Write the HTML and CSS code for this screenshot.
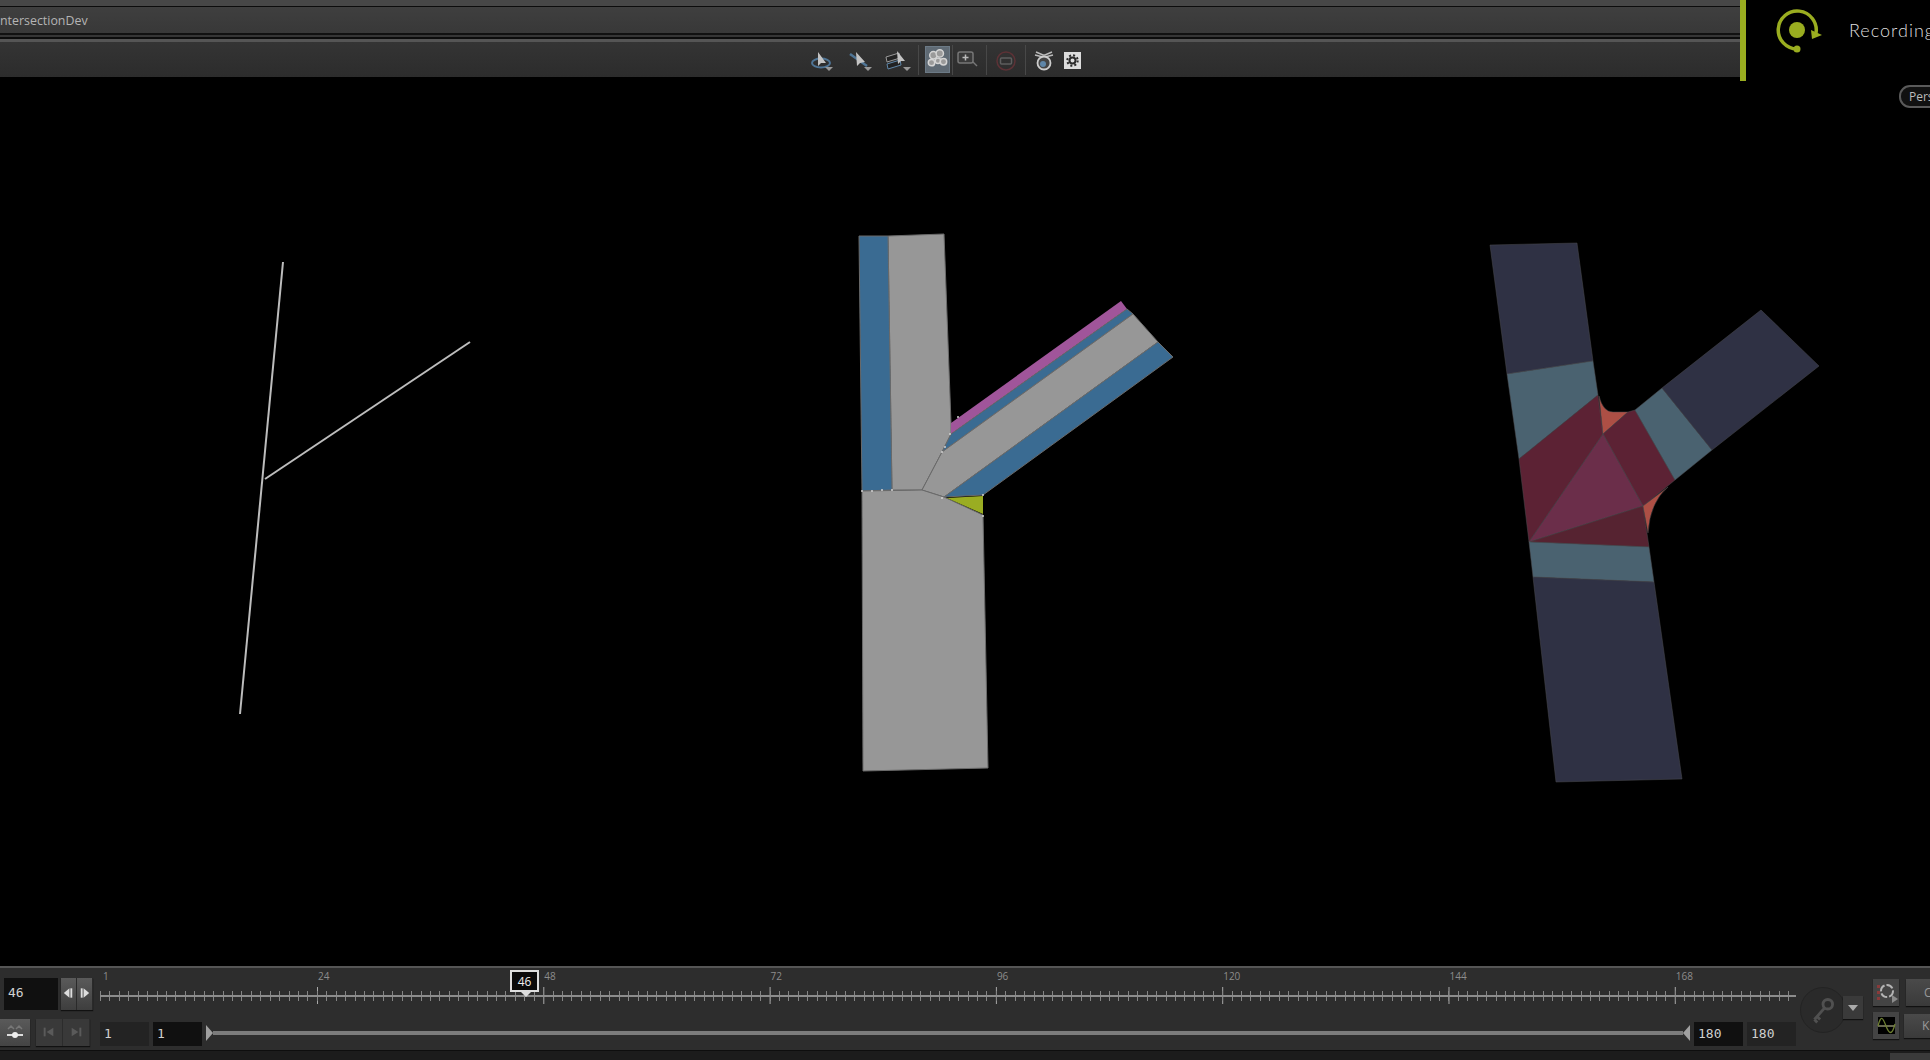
FILE: index.html
```html
<html>
  <head>
    <meta charset="utf-8">
    <link rel="stylesheet" href="styles.css">
  </head>
  <body>
    <div class="top">
      <div class="chrome">
        <div class="stripA"></div>
        <div class="titleBar">ntersectionDev</div>
        <div class="stripB"></div>
        <div class="toolbar">
          <svg class="tool" viewBox="0 0 28 28">
            <ellipse cx="13" cy="16" rx="9" ry="4.5" fill="none" stroke="#4f7596" stroke-width="2"/>
            <polygon points="10,5 10,19 13,16 18,16" fill="#c4c4c4"/>
            <polygon points="17,20 25,20 21,24" fill="#999"/>
          </svg>
          <svg class="tool" viewBox="0 0 28 28">
            <line x1="3" y1="7" x2="20" y2="19" stroke="#4f7596" stroke-width="2.5"/>
            <polygon points="9,5 10,19 13,16 18,15" fill="#c4c4c4"/>
            <polygon points="17,20 25,20 21,24" fill="#999"/>
          </svg>
          <svg class="tool" viewBox="0 0 28 28">
            <polygon points="1,10 14,6 15,11 2,15" fill="#222" stroke="#999"/>
            <polygon points="2,17 15,13 16,18 3,22" fill="#222" stroke="#5f86a8"/>
            <polygon points="12,4 13,17 16,14 20,14" fill="#c4c4c4"/>
            <polygon points="18,20 26,20 22,24" fill="#999"/>
          </svg>
          <div class="sep"></div>
          <div class="toolOn">
            <svg viewBox="0 0 25 26">
              <g fill="#9a9a9a" stroke="#d4d4d4" stroke-width="1.6">
                <circle cx="8" cy="9" r="4"/>
                <circle cx="15" cy="7" r="4"/>
                <circle cx="6" cy="17" r="3.5"/>
                <circle cx="13" cy="15" r="3"/>
                <circle cx="19" cy="16" r="3.5"/>
              </g>
            </svg>
          </div>
          <div class="sep"></div>
          <svg class="tool toolStart" viewBox="0 0 28 28">
            <rect x="5" y="5" width="15" height="11" rx="2" fill="#3a3a3a" stroke="#777" stroke-width="1.5"/>
            <path d="M12.500 7.500v6M9.500 10.500h6" stroke="#bbb" stroke-width="1.5"/>
            <line x1="20" y1="15" x2="24" y2="19" stroke="#777" stroke-width="1.5"/>
          </svg>
          <div class="sep"></div>
          <svg class="tool" viewBox="0 0 28 28">
            <circle cx="14" cy="14" r="9" fill="none" stroke="#5c3236" stroke-width="1.500"/>
            <rect x="8.500" y="11" width="11" height="6" rx="1" fill="none" stroke="#5e5e5e" stroke-width="1.500"/>
          </svg>
          <div class="sep"></div>
          <svg class="tool" viewBox="0 0 28 28">
            <path d="M6 5l7 3h2l7-3M5 8l8 2h2l8-2" fill="none" stroke="#bbb" stroke-width="1.500"/>
            <circle cx="14" cy="16" r="6.500" fill="#444" stroke="#ccc" stroke-width="1.800"/>
            <circle cx="13" cy="17" r="3" fill="#5f86a8"/>
          </svg>
          <div class="gearBox">
            <svg viewBox="0 0 17 17">
              <circle cx="8.500" cy="8.500" r="3" fill="none" stroke="#2a2a2a" stroke-width="2"/>
              <circle cx="8.500" cy="8.500" r="5.200" fill="none" stroke="#2a2a2a" stroke-width="2" stroke-dasharray="2 2.080"/>
            </svg>
          </div>
        </div>
      </div>
      <div class="greenBar"></div>
      <div class="recording">
        <svg class="recIcon" viewBox="0 0 48 48">
          <circle cx="21" cy="24" r="8" fill="#9aad20"/>
          <path d="M40 27A19 19 0 1 0 21 43" fill="none" stroke="#9aad20" stroke-width="3.500"/>
          <circle cx="21" cy="43" r="3.500" fill="#9aad20"/>
          <polygon points="35,24 46,29 36,33" fill="#9aad20"/>
        </svg>
        <span class="recText">Recording</span>
      </div>
    </div>

    <div class="scene">
      <svg class="sceneSvg" viewBox="0 81 1930 885">
        <g fill="none" stroke="#bdbdbd" stroke-width="2">
          <line x1="283" y1="262" x2="240" y2="714"/>
          <line x1="265" y1="479" x2="470" y2="342"/>
        </g>

        <g stroke="#6a6a6a" stroke-width="1">
          <polygon class="grey" points="888,236 944,234 951,423 951,434 942,452 922,490 892,490"/>
          <polygon class="blue" points="859,236 888,236 892,490 862,491"/>
          <polygon class="pink" points="951,423 1121,301 1127,309 951,434"/>
          <polygon class="blue" points="951,434 1127,309 1133,314 942,452"/>
          <polygon class="grey" points="942,452 1133,314 1158,342 944,497 922,490"/>
          <polygon class="blue" points="1158,342 1173,357 983,495 944,497"/>
          <polygon class="grey" points="862,491 922,490 944,497 983,515 988,768 863,771"/>
          <polygon class="lime" points="947,498 983,496 983,514"/>
        </g>
        <g fill="#d0d0d0">
          <circle cx="862" cy="491" r="1"/>
          <circle cx="872" cy="491" r="1"/>
          <circle cx="882" cy="490" r="1"/>
          <circle cx="892" cy="490" r="1"/>
          <circle cx="958" cy="417" r="1"/>
          <circle cx="950" cy="434" r="1"/>
          <circle cx="945" cy="447" r="1"/>
          <circle cx="942" cy="452" r="1"/>
          <circle cx="942" cy="498" r="1"/>
          <circle cx="983" cy="495" r="1"/>
          <circle cx="983" cy="516" r="1"/>
        </g>

        <g stroke-width="0.500" stroke="#4c4c50">
          <polygon class="navy" points="1490,245 1577,243 1593,361 1507,374"/>
          <polygon class="teal" points="1507,374 1593,361 1598,395 1519,459"/>
          <polygon class="wine" points="1519,459 1598,395 1603,434 1529,542"/>
          <path class="rust" d="M1599 396Q1603 412 1613 412L1628 412L1603 434Z"/>
          <polygon class="wine" points="1603,434 1628,412 1635,410 1675,480 1643,506"/>
          <polygon class="plum" points="1529,542 1603,434 1643,506"/>
          <polygon class="wineDark" points="1529,542 1643,506 1649,547"/>
          <path class="rust" d="M1643 506L1668 487Q1650 502 1648 533Z"/>
          <polygon class="teal" points="1635,410 1662,388 1712,450 1675,480"/>
          <polygon class="navy" points="1662,388 1761,310 1819,366 1712,450"/>
          <polygon class="teal" points="1529,542 1649,547 1654,582 1533,577"/>
          <polygon class="navy" points="1533,577 1654,582 1682,779 1556,782"/>
        </g>
      </svg>
      <div class="persp">Persp</div>
    </div>

    <div class="timeline">
      <div class="timeMain">
        <div class="rowA">
          <div class="numBox frameBox">46</div>
          <div class="stepBtns">
            <div class="stepBtn">
              <svg viewBox="0 0 16 32"><polygon points="9,11 9,21 3,16" fill="#ddd"/><rect x="10" y="11" width="2" height="10" fill="#ddd"/></svg>
            </div>
            <div class="stepBtn">
              <svg viewBox="0 0 16 32"><rect x="4" y="11" width="2" height="10" fill="#ddd"/><polygon points="7,11 7,21 13,16" fill="#ddd"/></svg>
            </div>
          </div>
          <div class="ruler">
            <div class="rulerLabels">
              <span class="rulerFirst">1</span>
              <span>24</span><span>48</span><span>72</span><span>96</span><span>120</span><span>144</span><span>168</span>
            </div>
            <div class="rulerTrack"></div>
            <div class="frameTip">46</div>
          </div>
        </div>
        <div class="rowB">
          <div class="audioBtn">
            <svg viewBox="0 0 30 27">
              <path d="M8 10l3-3 3 3M16 10l3-3 3 3" fill="none" stroke="#777" stroke-width="1.500"/>
              <line x1="7" y1="16" x2="23" y2="16" stroke="#ddd" stroke-width="2"/>
              <circle cx="15" cy="16" r="3" fill="#eee"/>
            </svg>
          </div>
          <div class="jumpBtns">
            <div class="jumpBtn">
              <svg viewBox="0 0 27 27"><rect x="8" y="9" width="2" height="9" fill="#5a5a5a"/><polygon points="18,9 18,18 11,13.500" fill="#5a5a5a"/></svg>
            </div>
            <div class="jumpBtn">
              <svg viewBox="0 0 27 27"><polygon points="9,9 9,18 16,13.500" fill="#5a5a5a"/><rect x="17" y="9" width="2" height="9" fill="#5a5a5a"/></svg>
            </div>
          </div>
          <div class="numBox rangeBox dim">1</div>
          <div class="numBox rangeBox">1</div>
          <div class="slider">
            <div class="handleL"></div>
            <div class="sliderLine"></div>
            <div class="handleR"></div>
          </div>
          <div class="numBox rangeBox">180</div>
          <div class="numBox rangeBox dim">180</div>
        </div>
      </div>
      <div class="timeSide">
        <div class="keyDial">
          <svg viewBox="0 0 46 46">
            <circle cx="28" cy="17" r="5" fill="none" stroke="#505050" stroke-width="3"/>
            <path d="M24.500 21L14 33M17 30l3 3M14 33l3 3" fill="none" stroke="#505050" stroke-width="3"/>
          </svg>
        </div>
        <div class="keyMenu"></div>
        <div class="sideCol">
          <div class="iconBtn">
            <svg viewBox="0 0 26 27">
              <rect x="4" y="6" width="3" height="3" fill="#8a3a3a"/>
              <rect x="4" y="12" width="3" height="3" fill="#8a3a3a"/>
              <rect x="4" y="18" width="3" height="3" fill="#8a3a3a"/>
              <circle cx="14" cy="12" r="6" fill="none" stroke="#b4b4b4" stroke-width="2" stroke-dasharray="7 2"/>
              <polygon points="19,16 25,20 19,24" fill="#8c8c8c"/>
            </svg>
          </div>
          <div class="iconBtn">
            <svg viewBox="0 0 26 27">
              <rect x="5" y="5" width="17" height="17" fill="#000"/>
              <line x1="5" y1="14" x2="22" y2="14" stroke="#cfcfa0" stroke-width="1"/>
              <path d="M5 14C8 2 10 6 13 14S19 24 22 12" fill="none" stroke="#6f8032" stroke-width="1.300"/>
            </svg>
          </div>
        </div>
        <div class="sideTextCol">
          <div class="textBtn">C</div>
          <div class="textBtn textBtnLow">K</div>
        </div>
      </div>
    </div>

    <div class="footer">
      <div class="footerTab"></div>
    </div>
  </body>
</html>
```

FILE: styles.css
```css
* {
  padding: 0;
  margin: 0;
  box-sizing: border-box;
}
html, body {
  width: 1930px;
  height: 1060px;
  overflow: hidden;
}
body {
  display: flex;
  flex-direction: column;
  background-color: #000;
  font-family: "Open Sans", "Liberation Sans", sans-serif;
}
svg {
  display: block;
}

/* top bars */
.top {
  display: flex;
  align-items: flex-start;
  height: 81px;
}
.chrome {
  flex: none;
  width: 1740px;
  height: 77px;
  background-color: #2e2e2e;
}
.stripA {
  height: 7px;
  background-color: #474747;
  border-bottom: 1px solid #0c0c0c;
}
.titleBar {
  height: 26px;
  line-height: 28px;
  font-size: 12.400px;
  color: #b4b4b4;
  background: linear-gradient(#3f3f3f, #383838);
}
.stripB {
  height: 9px;
  background-color: #353535;
  border-top: 2px solid #111;
  border-bottom: 3px solid #555;
  box-shadow: inset 0 -2px 0 #0c0c0c;
}
.toolbar {
  display: grid;
  grid-template-columns: 38px 39px 38px 1px 33px 1px 33px 1px 38px 1px 36px 20px;
  align-items: center;
  justify-items: center;
  height: 35px;
  padding-left: 803px;
  background: linear-gradient(#343434, #2c2c2c);
}
.tool {
  width: 28px;
  height: 28px;
  margin-top: 3px;
}
.toolStart {
  justify-self: start;
}
.sep {
  width: 1px;
  height: 30px;
  background-color: #484848;
}
.toolOn {
  justify-self: end;
  width: 25px;
  height: 27px;
  margin-right: 2px;
  background-color: #5f6a74;
  border: 1px solid #6c7a86;
}
.gearBox {
  width: 17px;
  height: 17px;
  margin-top: 1px;
  background-color: #dcdcdc;
}
.greenBar {
  flex: none;
  width: 6px;
  height: 81px;
  background-color: #9aad20;
}
.recording {
  display: flex;
  flex: none;
  align-items: center;
  height: 60px;
  padding-left: 30px;
}
.recIcon {
  width: 48px;
  height: 48px;
}
.recText {
  margin-left: 25px;
  font-family: Lato, "Open Sans", sans-serif;
  font-weight: 300;
  font-size: 18px;
  letter-spacing: 1px;
  color: #dedede;
  white-space: nowrap;
}

/* viewport */
.scene {
  position: relative;
  flex: none;
  height: 885px;
}
.sceneSvg {
  width: 1930px;
  height: 885px;
}
.grey { fill: #979797; }
.blue { fill: #3a6b92; }
.pink { fill: #a0559a; stroke: none; }
.lime { fill: #9aad22; stroke: none; }
.navy { fill: #2f3144; }
.teal { fill: #4a6270; }
.wine { fill: #5c2234; }
.wineDark { fill: #562331; }
.plum { fill: #6b2e4a; }
.rust { fill: #ad4f45; }
.persp {
  position: absolute;
  top: 4px;
  left: 1899px;
  width: 60px;
  height: 23px;
  padding-left: 8px;
  line-height: 19px;
  font-size: 12px;
  color: #bcbcbc;
  background-color: #111;
  border: 2px solid #5a5a5a;
  border-radius: 11px;
}

/* timeline */
.timeline {
  display: flex;
  flex: none;
  height: 85px;
  background-color: #2d2d2d;
  border-top: 2px solid #555;
  border-bottom: 1px solid #0e0e0e;
}
.timeMain {
  flex: none;
  width: 1796px;
}
.rowA {
  display: flex;
  align-items: flex-start;
  height: 45px;
  padding-left: 4px;
}
.rowB {
  display: flex;
  align-items: flex-start;
  height: 37px;
  padding-top: 6px;
}
.numBox {
  flex: none;
  padding-left: 4px;
  font-family: "DejaVu Sans Mono", "Liberation Mono", monospace;
  font-size: 13px;
  color: #d0d0d0;
  background-color: #101010;
}
.frameBox {
  width: 54px;
  height: 32px;
  margin-top: 10px;
  line-height: 30px;
}
.stepBtns {
  display: flex;
  flex: none;
  margin-top: 10px;
  margin-left: 3px;
  box-shadow: 0 1px 1px #111;
}
.stepBtn {
  width: 16px;
  height: 32px;
  background: linear-gradient(#5a5a5a, #3e3e3e);
  border-right: 1px solid #2a2a2a;
}
.ruler {
  position: relative;
  flex: none;
  width: 1696px;
  margin-top: 2px;
  margin-left: 7px;
}
.rulerLabels {
  display: flex;
  height: 17px;
  font-size: 10px;
  line-height: 12px;
  color: #8c8c8c;
}
.rulerLabels span {
  flex: none;
  width: 226.300px;
  padding-left: 1px;
}
.rulerLabels .rulerFirst {
  width: 217px;
  padding-left: 3px;
}
.rulerTrack {
  height: 17px;
  background-image:
    linear-gradient(#8c8c8c, #8c8c8c),
    repeating-linear-gradient(90deg, #858585 0, #858585 1px, transparent 1px, transparent 9.430px),
    linear-gradient(90deg, #a8a8a8 1px, transparent 1px);
  background-size: 100% 2px, 1689px 10px, 226.300px 100%;
  background-position: 0 8px, 0 4px, 217px 0;
  background-repeat: no-repeat, no-repeat, repeat-x;
}
.frameTip {
  position: absolute;
  top: 0;
  left: 410px;
  width: 29px;
  height: 22px;
  line-height: 19px;
  font-size: 12px;
  text-align: center;
  color: #eee;
  background-color: #0a0a0a;
  border: 2px solid #ddd;
}
.frameTip::after {
  content: "";
  position: absolute;
  top: 20px;
  left: 9px;
  border-left: 5px solid transparent;
  border-right: 5px solid transparent;
  border-top: 5px solid #ddd;
}
.audioBtn {
  flex: none;
  width: 30px;
  height: 27px;
  background: linear-gradient(#5a5a5a, #444);
  box-shadow: 0 1px 1px #111;
}
.jumpBtns {
  display: flex;
  flex: none;
  margin-left: 6px;
  box-shadow: 0 1px 1px #111;
}
.jumpBtn {
  width: 27px;
  height: 27px;
  background-color: #393939;
  border-right: 1px solid #2c2c2c;
}
.rangeBox {
  width: 49px;
  height: 24px;
  margin-top: 3px;
  margin-left: 4px;
  line-height: 24px;
}
.rangeBox.dim {
  background-color: #232323;
}
.jumpBtns + .rangeBox {
  margin-left: 10px;
}
.slider {
  display: flex;
  align-items: center;
  flex: 1;
  height: 28px;
  margin-left: 4px;
}
.sliderLine {
  flex: 1;
  height: 4px;
  background-color: #7c7c7c;
}
.handleL {
  border-top: 8px solid transparent;
  border-bottom: 8px solid transparent;
  border-left: 7px solid #a0a0a0;
}
.handleR {
  border-top: 8px solid transparent;
  border-bottom: 8px solid transparent;
  border-right: 7px solid #a0a0a0;
}
.timeSide {
  display: flex;
  align-items: flex-start;
  flex: 1;
  overflow: hidden;
}
.keyDial {
  flex: none;
  width: 46px;
  height: 46px;
  margin-top: 19px;
  margin-left: 4px;
  background-color: #2a2a2a;
  border: 1px solid #232323;
  border-radius: 50%;
}
.keyMenu {
  position: relative;
  flex: none;
  width: 20px;
  height: 23px;
  margin-top: 28px;
  margin-left: -3px;
  background-color: #3a3a3a;
  box-shadow: 0 1px 1px #111;
}
.keyMenu::after {
  content: "";
  position: absolute;
  top: 9px;
  left: 5px;
  border-left: 5px solid transparent;
  border-right: 5px solid transparent;
  border-top: 6px solid #aaa;
}
.sideCol {
  flex: none;
  width: 26px;
  margin-top: 11px;
  margin-left: 10px;
}
.iconBtn {
  height: 27px;
  margin-bottom: 6px;
  background-color: #444;
  box-shadow: 0 1px 1px #111;
}
.sideTextCol {
  flex: none;
  width: 40px;
  margin-top: 11px;
  margin-left: 7px;
}
.textBtn {
  height: 27px;
  padding-left: 18px;
  line-height: 27px;
  font-size: 12px;
  color: #999;
  background: linear-gradient(#4a4a4a, #3a3a3a);
  box-shadow: 0 1px 1px #111;
}
.textBtnLow {
  height: 24px;
  margin-top: 8px;
  margin-left: -2px;
  line-height: 24px;
}
.footer {
  display: flex;
  flex: none;
  justify-content: flex-end;
  height: 9px;
  background-color: #1c1c1c;
}
.footerTab {
  width: 40px;
  height: 7px;
  margin-top: 2px;
  background-color: #3a3a3a;
}
```
